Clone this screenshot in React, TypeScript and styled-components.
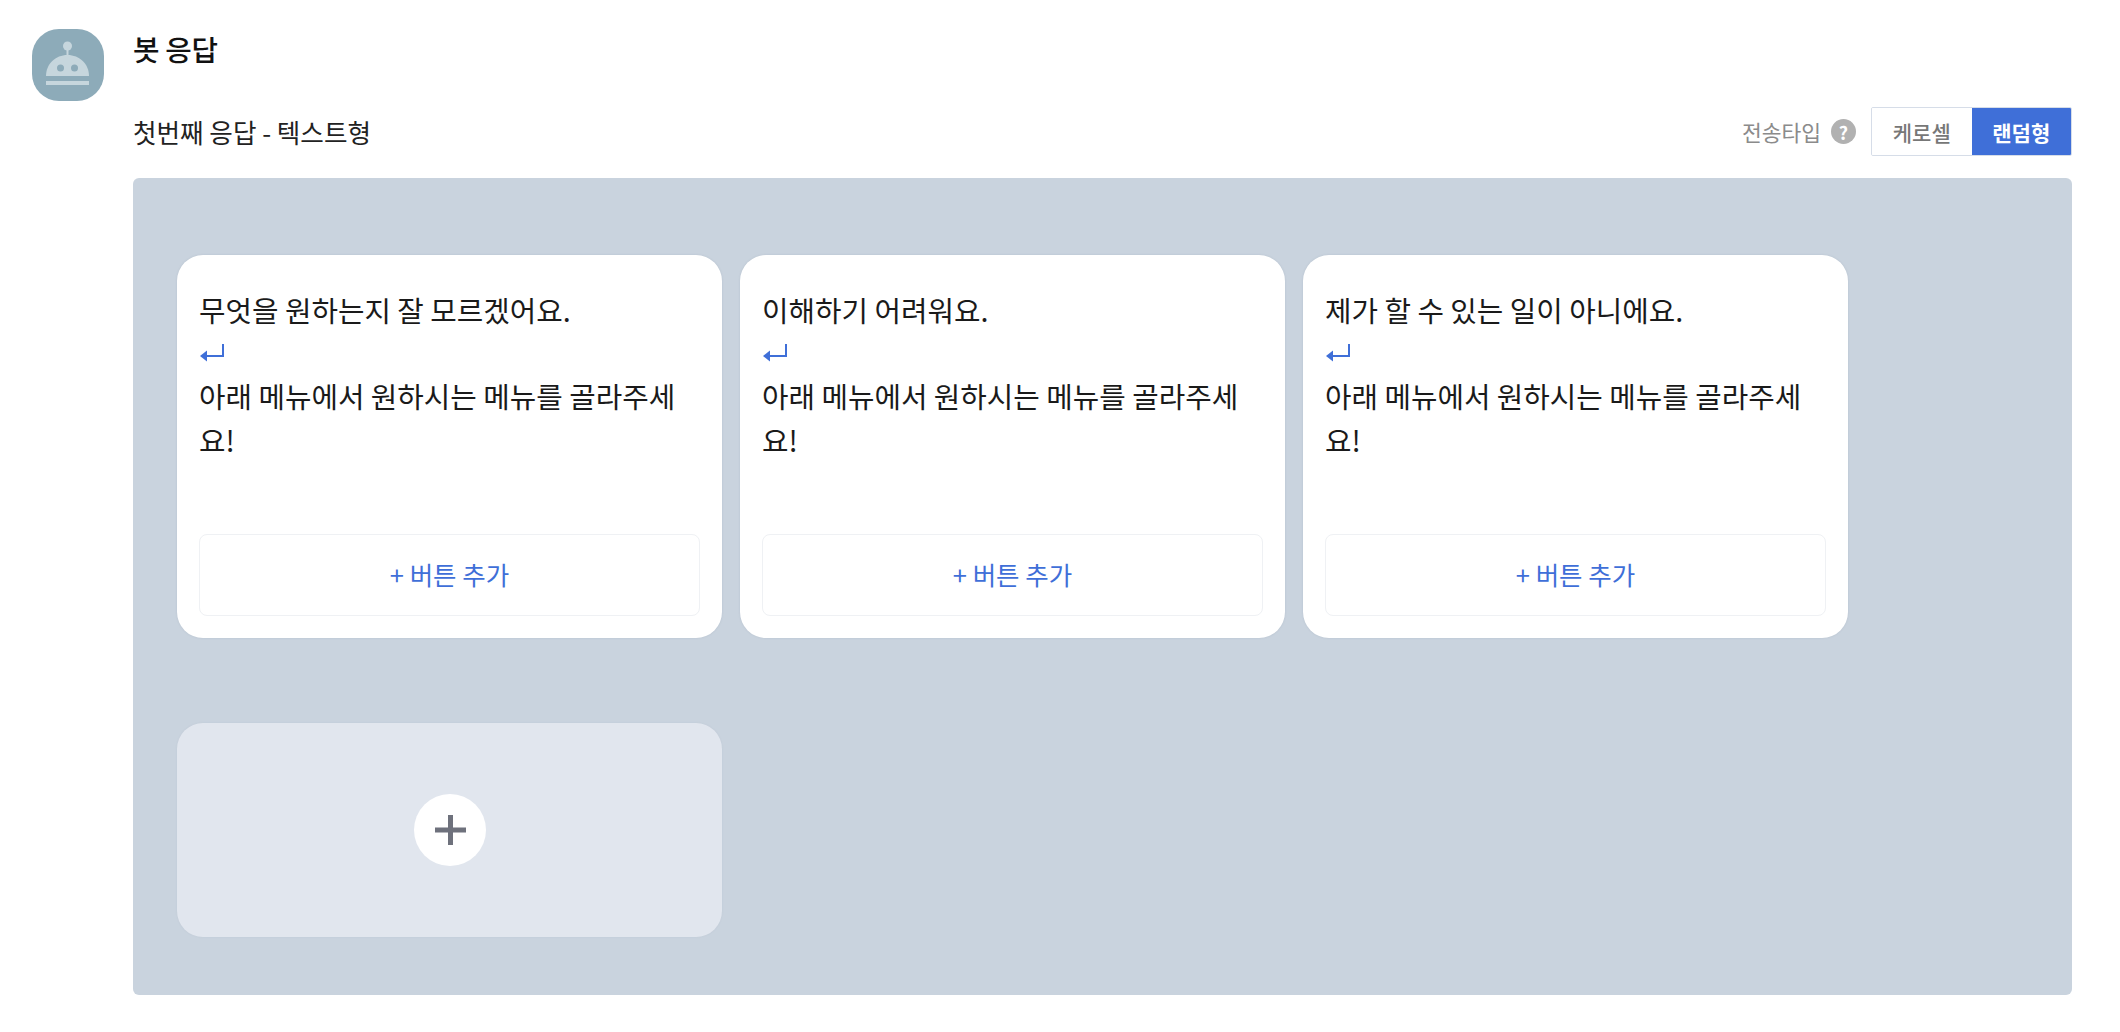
import styled, { createGlobalStyle } from 'styled-components';

const cards = [
  '무엇을 원하는지 잘 모르겠어요.',
  '이해하기 어려워요.',
  '제가 할 수 있는 일이 아니에요.',
];

const GlobalStyle = createGlobalStyle`
  html, body {
    margin: 0;
    background: #fff;
    font-family: "Noto Sans CJK KR", "Noto Sans", sans-serif;
  }
  * { box-sizing: border-box; }
`;

const Page = styled.div`
  display: flex;
  align-items: flex-start;
  gap: 29px;
  height: 1032px;
  padding: 29px 48px 0 32px;
  overflow: hidden;
`;

const Avatar = styled.div`
  flex: none;
  width: 72px;
  height: 72px;
  border-radius: 27px;
  background: #8dabb9;
  display: flex;
  align-items: center;
  justify-content: center;
`;

const Main = styled.div`
  flex: 1;
  min-width: 0;
`;

const Title = styled.h2`
  margin: 2px 0 0;
  height: 36px;
  font-size: 28.8px;
  line-height: 36px;
  font-weight: 500;
  letter-spacing: -0.3px;
  color: #111;
`;

const SubRow = styled.div`
  display: flex;
  align-items: center;
  justify-content: space-between;
  margin-top: 40px;
  height: 49px;
`;

const SubTitle = styled.div`
  font-size: 25.6px;
  color: #222;
`;

const SendType = styled.div`
  display: flex;
  align-items: center;
`;

const SendLabel = styled.span`
  font-size: 21.5px;
  color: #8b8b8b;
  margin-right: 10px;
`;

const Help = styled.span`
  width: 25px;
  height: 25px;
  border-radius: 50%;
  background: #b1b1b1;
  color: #fff;
  font-size: 18px;
  font-weight: 700;
  display: flex;
  align-items: center;
  justify-content: center;
  margin-right: 15px;
`;

const Toggle = styled.div`
  display: flex;
  width: 201px;
  height: 49px;
  border: 1px solid #d6dde8;
  border-radius: 2px;
  overflow: hidden;
`;

const ToggleItem = styled.div<{ $active?: boolean }>`
  flex: 1;
  display: flex;
  align-items: center;
  justify-content: center;
  font-size: 21px;
  font-weight: ${p => (p.$active ? 700 : 500)};
  color: ${p => (p.$active ? '#fff' : '#777')};
  background: ${p => (p.$active ? '#3f6fd8' : '#fff')};
`;

const Panel = styled.div`
  margin-top: 22px;
  height: 817px;
  background: #c9d3de;
  border-radius: 6px;
  padding: 77px 44px 0;
  display: flex;
  flex-direction: column;
  gap: 85px;
`;

const CardRow = styled.div`
  display: flex;
  gap: 18px;
`;

const Card = styled.div`
  width: 545px;
  height: 383px;
  background: #fff;
  border-radius: 26px;
  box-shadow: 0 0 2px rgba(120, 135, 155, 0.25);
  padding: 33px 22px 22px;
  display: flex;
  flex-direction: column;
  justify-content: space-between;
`;

const Message = styled.div`
  font-size: 28.8px;
  line-height: 44px;
  color: #1a1a1a;
`;

const ReturnMark = styled.svg`
  display: block;
  width: 26px;
  height: 42px;
`;

const AddButton = styled.div`
  height: 82px;
  padding-bottom: 3px;
  border: 1px solid #eff1f4;
  border-radius: 8px;
  display: flex;
  align-items: center;
  justify-content: center;
  font-size: 25.5px;
  font-weight: 400;
  color: #3f6fd8;
`;

const AddCard = styled.div`
  width: 545px;
  height: 214px;
  background: #e1e6ee;
  border-radius: 26px;
  box-shadow: 0 0 2px rgba(120, 135, 155, 0.12);
  display: flex;
  align-items: center;
  justify-content: center;
`;

const AddCircle = styled.div`
  width: 72px;
  height: 72px;
  border-radius: 50%;
  background: #fff;
  display: flex;
  align-items: center;
  justify-content: center;
`;

const BotIcon = () => (
  <svg width="72" height="72" viewBox="0 0 72 72" fill="#c6d6dd">
    <circle cx="35.500" cy="17" r="4.500" />
    <rect x="34.500" y="20" width="2" height="7" />
    <path d="M14 47c0-12 9.500-21 21.500-21S57 35 57 47z" />
    <rect x="14" y="52" width="43" height="4" />
    <circle cx="28.500" cy="39" r="3.500" fill="#8dabb9" />
    <circle cx="42.500" cy="39" r="3.500" fill="#8dabb9" />
  </svg>
);

const ReturnIcon = () => (
  <ReturnMark viewBox="0 0 26 42" fill="none">
    <path d="M24 12v12H4" stroke="#3f6fd8" strokeWidth="2" />
    <path d="M1 24l7-5.500v11z" fill="#3f6fd8" />
  </ReturnMark>
);

export default function App() {
  return (
    <>
      <GlobalStyle />
      <Page>
        <Avatar>
          <BotIcon />
        </Avatar>
        <Main>
          <Title>봇 응답</Title>
          <SubRow>
            <SubTitle>첫번째 응답 - 텍스트형</SubTitle>
            <SendType>
              <SendLabel>전송타입</SendLabel>
              <Help>?</Help>
              <Toggle>
                <ToggleItem>케로셀</ToggleItem>
                <ToggleItem $active>랜덤형</ToggleItem>
              </Toggle>
            </SendType>
          </SubRow>
          <Panel>
            <CardRow>
              {cards.map(text => (
                <Card key={text}>
                  <Message>
                    {text}
                    <ReturnIcon />
                    아래 메뉴에서 원하시는 메뉴를 골라주세요!
                  </Message>
                  <AddButton>+ 버튼 추가</AddButton>
                </Card>
              ))}
            </CardRow>
            <AddCard>
              <AddCircle>
                <svg width="32" height="32" viewBox="0 0 32 32" fill="#6e717c">
                  <rect x="14" y="1" width="5" height="30" />
                  <rect x="1" y="13.500" width="31" height="5" />
                </svg>
              </AddCircle>
            </AddCard>
          </Panel>
        </Main>
      </Page>
    </>
  );
}
